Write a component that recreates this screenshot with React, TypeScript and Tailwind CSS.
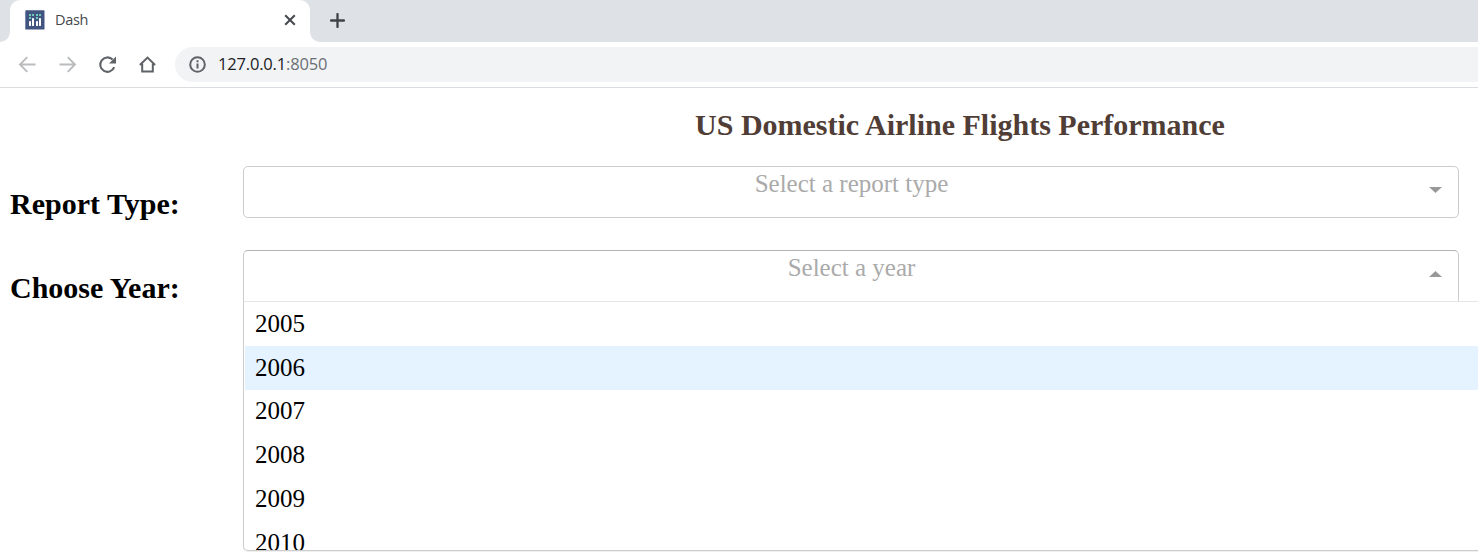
import React from "react";

const YEARS = ["2005", "2006", "2007", "2008", "2009", "2010"];

function Favicon() {
  return (
    <svg width="20" height="20" viewBox="0 0 20 20" className="shrink-0">
      <rect x="0.3" y="0.3" width="19.2" height="19.2" rx="0.6" fill="#425580" />
      <g fill="#6fc9b8">
        <rect x="4" y="4" width="2" height="2" />
        <rect x="7" y="4" width="2" height="2" />
        <rect x="11" y="4" width="2" height="2" />
        <rect x="14" y="4" width="2" height="2" />
        <rect x="4" y="7" width="2" height="2" />
        <rect x="11" y="7" width="2" height="2" />
      </g>
      <g fill="#ffffff">
        <rect x="4" y="11" width="2" height="5" rx="0.4" />
        <rect x="7" y="8" width="2" height="8" rx="0.4" />
        <rect x="11" y="11" width="2" height="5" rx="0.4" />
        <rect x="14" y="8" width="2" height="8" rx="0.4" />
      </g>
    </svg>
  );
}

function TabStrip() {
  return (
    <div className="flex h-[42px] bg-white">
      <div className="w-[10px] rounded-br-[10px] bg-[#dee1e6]" />
      <div className="w-[300px] bg-[linear-gradient(#dee1e6_50%,#ffffff_50%)]">
        <div className="flex h-full items-center rounded-t-[10px] bg-white pl-[15px] pr-[14px] pb-[2px]">
          <Favicon />
          <span className="ml-[10px] flex-1 font-['Open_Sans',sans-serif] text-[14.5px] tracking-[-0.3px] text-[#45494d]">
            Dash
          </span>
          <svg width="12" height="12" viewBox="0 0 12 12" stroke="#45494d" strokeWidth="2">
            <path d="M1.2 1.2 10.8 10.8M10.8 1.2 1.2 10.8" />
          </svg>
        </div>
      </div>
      <div className="flex flex-1 items-center rounded-bl-[10px] bg-[#dee1e6] pb-[2px] pl-[20px]">
        <svg width="15" height="15" viewBox="0 0 15 15" stroke="#3f4246" strokeWidth="2.3" strokeLinecap="round">
          <path d="M7.5 1.1V13.9M1.1 7.5H13.9" />
        </svg>
      </div>
    </div>
  );
}

function Toolbar() {
  return (
    <div className="flex h-[46px] items-center border-b border-[#dadce0] bg-white pl-[17px]">
      <svg width="20" height="20" viewBox="0 0 20 20" fill="none" stroke="#babcbe" strokeWidth="1.9" className="mr-[20px] shrink-0">
        <path d="M18.5 9.5H3.4M10.3 2.2 3 9.5 10.3 16.8" />
      </svg>
      <svg width="20" height="20" viewBox="0 0 20 20" fill="none" stroke="#babcbe" strokeWidth="1.9" className="mr-[20px] shrink-0">
        <path d="M2.5 9.5H17.6M10.7 2.2 18 9.5 10.7 16.8" />
      </svg>
      <svg width="20" height="20" viewBox="0 0 20 20" fill="none" className="mr-[20px] shrink-0">
        <path d="M17.2 12.1A7.2 7.2 0 1 1 15.6 4.6" stroke="#5f6368" strokeWidth="2.1" />
        <path d="M19 1.4V8.4H12Z" fill="#5f6368" />
      </svg>
      <svg width="20" height="20" viewBox="0 0 20 20" fill="none" stroke="#5f6368" strokeWidth="2" className="mr-[18px] shrink-0">
        <path d="M2.9 10 10.5 2.6 18.1 10M5.2 8.8V16.6H15.8V8.8" />
      </svg>
      <div className="flex h-[35px] flex-1 items-center rounded-l-full bg-[#f1f3f4] pl-[14px]">
        <svg width="17" height="17" viewBox="0 0 17 17" className="shrink-0">
          <circle cx="8.5" cy="8.5" r="7.3" fill="none" stroke="#5f6368" strokeWidth="2" />
          <path d="M7.5 7.5H9.5V12.6H7.5ZM7.5 4.3H9.5V6.2H7.5Z" fill="#5f6368" />
        </svg>
        <span className="ml-[12px] font-['Open_Sans',sans-serif] text-[16.5px] tracking-[-0.18px] text-[#202124]">
          127.0.0.1<span className="text-[#6b6f74]">:8050</span>
        </span>
      </div>
    </div>
  );
}

function Arrow({ up = false }: { up?: boolean }) {
  return (
    <svg width="13" height="6" viewBox="0 0 13 6" fill="#999999" className="mt-[20px] shrink-0">
      <path d={up ? "M0 6H13L6.5 0Z" : "M0 0H13L6.5 6Z"} />
    </svg>
  );
}

function Select({ placeholder, open = false }: { placeholder: string; open?: boolean }) {
  return (
    <div
      className={
        open
          ? "flex h-[52px] w-[1216px] rounded-t-[5px] border border-[#cccccc] border-t-[#b3b3b3] border-b-[#e6e6e6] pr-[16px]"
          : "flex h-[52px] w-[1216px] rounded-[5px] border border-[#cccccc] pr-[16px]"
      }
    >
      <span className="flex-1 pl-[30px] text-center text-[25px] leading-[33px] text-[#aaaaaa]">{placeholder}</span>
      <Arrow up={open} />
    </div>
  );
}

function YearMenu() {
  return (
    <ul className="absolute left-0 top-[51px] h-[250px] w-[1260px] overflow-hidden rounded-bl-[5px] border border-[#cccccc] border-t-[#e6e6e6] bg-white text-[25px] leading-[43.7px] text-black shadow-[0_1px_0_rgba(0,0,0,0.06)]">
      {YEARS.map((year) => (
        <li
          key={year}
          className={year === "2006" ? "ml-px bg-[#e5f2ff] pl-[10px] shadow-[0_1px_0_#e5f2ff]" : "pl-[11px]"}
        >
          {year}
        </li>
      ))}
    </ul>
  );
}

export default function App() {
  return (
    <div className="h-[556px] w-[1478px] overflow-hidden bg-white font-['Liberation_Serif',serif]">
      <TabStrip />
      <Toolbar />
      <main>
        <h1 className="h-[78px] pl-[442px] pt-[19px] text-center text-[30px] font-bold leading-[35px] text-[#503d36]">
          US Domestic Airline Flights Performance
        </h1>
        <div className="flex h-[84px] pl-[10px]">
          <h2 className="w-[233px] pt-[20px] text-[30px] font-bold leading-[35px] text-black">Report Type:</h2>
          <Select placeholder="Select a report type" />
        </div>
        <div className="flex h-[84px] pl-[10px]">
          <h2 className="w-[233px] pt-[20px] text-[30px] font-bold leading-[35px] text-black">Choose Year:</h2>
          <div className="relative">
            <Select placeholder="Select a year" open />
            <YearMenu />
          </div>
        </div>
      </main>
    </div>
  );
}
